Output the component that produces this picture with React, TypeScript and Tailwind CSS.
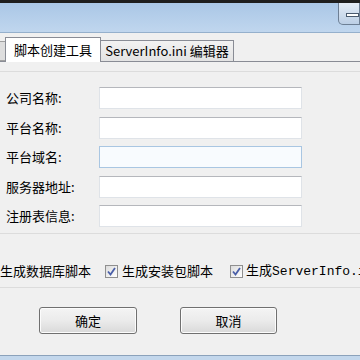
import React from "react";

const cjk = { fontFamily: '"Noto Sans CJK SC", "Noto Sans", sans-serif' };

const fields = ["公司名称:", "平台名称:", "平台域名:", "服务器地址:", "注册表信息:"];

const Check: React.FC = () => (
    <div className="w-[13px] h-[13px] shrink-0 border border-[#8f8f8f] bg-gradient-to-br from-[#dcdcdc] to-[#ffffff] flex items-center justify-center">
        <svg width="9" height="9" viewBox="0 0 9 9">
            <path d="M1 4.5 L3.5 7.5 L8 1" fill="none" stroke="#4a5fa8" strokeWidth="1.8" />
        </svg>
    </div>
);

const Btn: React.FC<{ label: string; w: string }> = ({ label, w }) => (
    <div className={`${w} h-[27px] rounded-[3px] border border-[#707070] bg-gradient-to-b from-[#f4f4f4] via-[#ebebeb] to-[#d9d9d9] flex items-center justify-center text-[13px] text-black shadow-[inset_0_0_0_1px_#fcfcfc]`}>
        {label}
    </div>
);

export default function App() {
    return (
        <div className="w-[360px] h-[360px] overflow-hidden bg-[#f0f0f0] flex flex-col" style={cjk}>
            {/* title bar */}
            <div className="h-[3px] bg-[#1e1e1e] shrink-0" />
            <div className="h-[30px] shrink-0 bg-gradient-to-b from-[#aac7e6] to-[#c0d6ee] border-b border-[#95b0cc] flex justify-end">
                <div className="w-[22px] h-[22px] border border-t-0 border-[#6d7f94] rounded-bl-[5px] bg-gradient-to-b from-[#e4ecf6] to-[#bccfe5] flex items-center pl-[7px]">
                    <div className="w-[14px] h-[4px] bg-white border border-[#4a5a6e] mt-[2px]" />
                </div>
            </div>

            {/* tabs */}
            <div className="flex items-end h-[28px] shrink-0 pt-[4px] text-[13px] text-black">
                <div className="w-[5px] h-[20px] bg-[#dedede] border-y border-[#a0a0a0]" />
                <div className="w-[96px] h-[25px] bg-white border border-b-0 border-[#898c95] flex items-center justify-center relative z-10 -mb-px">
                    脚本创建工具
                </div>
                <div className="w-[133px] h-[21px] bg-gradient-to-b from-[#f2f2f2] to-[#e3e3e3] border border-l-0 border-b-0 border-[#898c95] flex items-center justify-center">
                    ServerInfo.ini 编辑器
                </div>
            </div>

            {/* panel */}
            <div className="flex-1 border-t border-[#898c95] flex flex-col">
                <div className="h-[10px] border-b border-[#dcdcdc]" />
                <div className="flex flex-col gap-[7.5px] pt-[15px] pl-[6px]">
                    {fields.map((f, i) => (
                        <div key={f} className="flex items-center h-[22px] text-[13px] text-black">
                            <div className="w-[93px]">{f}</div>
                            <div
                                className={`w-[203px] h-[22px] border ${
                                    i === 2
                                        ? "border-[#a9c6e2] bg-[#f8fbfe]"
                                        : "border-[#dfe3e8] border-t-[#b5b7bc] bg-white"
                                }`}
                            />
                        </div>
                    ))}
                </div>
                <div className="h-[7px] border-b border-[#dcdcdc]" />

                <div className="flex items-center h-[53px] pt-[21px] text-[13px] text-black whitespace-nowrap">
                    <div className="flex items-center gap-[4px] ml-[-17px]">
                        <Check />
                        <span>生成数据库脚本</span>
                    </div>
                    <div className="flex items-center gap-[4px] ml-[14px]">
                        <Check />
                        <span>生成安装包脚本</span>
                    </div>
                    <div className="flex items-center gap-[3px] ml-[17px]">
                        <Check />
                        <span>
                            生成<span style={{ fontFamily: '"Liberation Mono", monospace' }}>ServerInfo.ini</span>
                        </span>
                    </div>
                </div>
                <div className="border-b border-[#dcdcdc]" />

                <div className="flex pt-[19px] pl-[39px] gap-[43px]">
                    <Btn label="确定" w="w-[98px]" />
                    <Btn label="取消" w="w-[97px]" />
                </div>
            </div>

            {/* bottom frame */}
            <div className="h-[5px] shrink-0 border-t border-[#8ba2bb] bg-[#c3d7ec]" />
        </div>
    );
}
